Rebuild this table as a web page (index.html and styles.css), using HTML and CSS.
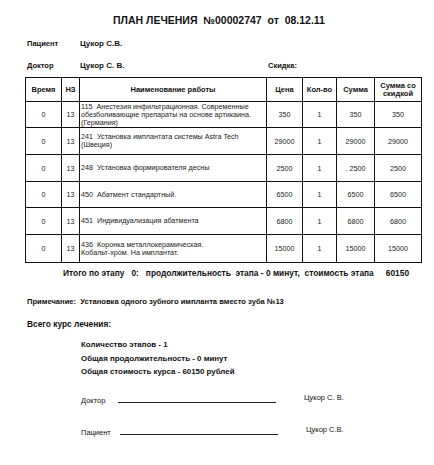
FILE: index.html
```html
<!DOCTYPE html>
<html lang="ru">
<head>
<meta charset="utf-8">
<link rel="stylesheet" href="styles.css">
</head>
<body>
<div class="page">
  <h1 class="title">ПЛАН ЛЕЧЕНИЯ&nbsp; №00002747&nbsp; от&nbsp; 08.12.11</h1>
  <div class="info">
    <span class="lbl">Пациент</span><span class="val">Цукор С.В.</span>
  </div>
  <div class="info">
    <span class="lbl">Доктор</span><span class="val">Цукор С. В.</span><span class="disc">Скидка:</span>
  </div>
  <table class="plan">
    <colgroup>
      <col class="c-time"><col class="c-nz"><col class="c-name"><col class="c-price"><col class="c-qty"><col class="c-sum"><col class="c-disc">
    </colgroup>
    <thead>
      <tr><th>Время</th><th>НЗ</th><th>Наименование работы</th><th>Цена</th><th>Кол-во</th><th>Сумма</th><th>Сумма со скидкой</th></tr>
    </thead>
    <tbody>
      <tr class="r1"><td>0</td><td>13</td><td class="name">115&nbsp; Анестезия инфильтрационная. Современные обезболивающие препараты на основе артикаина. (Германия)</td><td>350</td><td>1</td><td>350</td><td>350</td></tr>
      <tr class="r2"><td>0</td><td>13</td><td class="name">241&nbsp; Установка имплантата системы Astra Tech (Швеция)</td><td>29000</td><td>1</td><td>29000</td><td>29000</td></tr>
      <tr class="r3"><td>0</td><td>13</td><td class="name">248&nbsp; Установка формирователя десны</td><td>2500</td><td>1</td><td>.&nbsp;2500</td><td>2500</td></tr>
      <tr class="r4"><td>0</td><td>13</td><td class="name">450&nbsp; Абатмент стандартный.</td><td>6500</td><td>1</td><td>6500</td><td>6500</td></tr>
      <tr class="r5"><td>0</td><td>13</td><td class="name">451&nbsp; Индивидуализация абатмента</td><td>6800</td><td>1</td><td>6800</td><td>6800</td></tr>
      <tr class="r6"><td>0</td><td>13</td><td class="name">436&nbsp; Коронка металлокерамическая.<br>Кобальт-хром. На имплантат.</td><td>15000</td><td>1</td><td>15000</td><td>15000</td></tr>
    </tbody>
  </table>
  <div class="total">
    <span>Итого по этапу&nbsp;&nbsp; 0:&nbsp;&nbsp; продолжительность&nbsp; этапа - 0 минут,&nbsp; стоимость этапа</span>
    <span class="sum">60150</span>
  </div>
  <p class="note">Примечание:&nbsp; Установка одного зубного импланта вместо зуба №13</p>
  <h2 class="course">Всего курс лечения:</h2>
  <div class="summary">
    <div>Количество этапов - 1</div>
    <div>Общая продолжительность - 0 минут</div>
    <div>Общая стоимость курса - 60150 рублей</div>
  </div>
  <div class="sign">
    <span class="slbl">Доктор</span><span class="line"></span><span class="sname">Цукор С. В.</span>
  </div>
  <div class="sign">
    <span class="slbl">Пациент</span><span class="line"></span><span class="sname">Цукор С.В.</span>
  </div>
</div>
</body>
</html>
```
FILE: styles.css
```css
html, body {
  margin: 0;
  padding: 0;
  background: #fff;
}
.page {
  width: 434px;
  height: 465px;
  overflow: hidden;
  font-family: "Liberation Sans", Arial, sans-serif;
  color: #111;
  padding-top: 13px;
  box-sizing: border-box;
}
.title {
  margin: 0;
  font-size: 10.5px;
  line-height: 14px;
  font-weight: bold;
  text-align: center;
  padding-left: 4px;
}
.info {
  display: flex;
  align-items: center;
  height: 22px;
  padding-left: 27px;
  font-size: 7.5px;
  font-weight: bold;
}
.info:first-of-type { margin-top: 5px; }
.lbl { width: 53px; }
.val { width: 188px; font-size: 8px; }
.plan {
  margin: 1px 0 0 25px;
  border-collapse: collapse;
  table-layout: fixed;
  width: 396px;
  font-size: 7.2px;
  color: #222;
}
.c-time { width: 36px; }
.c-nz { width: 18px; }
.c-name { width: 187px; }
.c-price { width: 36px; }
.c-qty { width: 34px; }
.c-sum { width: 38px; }
.c-disc { width: 47px; }
.plan th, .plan td {
  border: 1px solid #111;
  padding: 0;
  text-align: center;
  vertical-align: middle;
}
.plan th {
  height: 23px;
  font-weight: bold;
  font-size: 7.5px;
  line-height: 8px;
  color: #111;
}
.plan td.name {
  text-align: left;
  padding-left: 1px;
  line-height: 8px;
}
.r1 td { height: 25px; }
.r2 td { height: 26px; }
.r3 td { height: 26px; }
.r4 td { height: 25px; }
.r5 td { height: 26px; }
.r6 td { height: 27px; }
.total {
  display: flex;
  margin-top: 5px;
  padding-left: 63px;
  font-size: 8.4px;
  font-weight: bold;
  line-height: 10px;
}
.total .sum { margin-left: 12px; }
.note {
  margin: 19px 0 0 27px;
  font-size: 7.6px;
  font-weight: bold;
  line-height: 9px;
}
.course {
  margin: 13px 0 0 27px;
  font-size: 8.4px;
  line-height: 11px;
  font-weight: bold;
}
.summary {
  margin: 8px 0 0 81px;
  font-size: 7.9px;
  font-weight: bold;
  line-height: 13.5px;
}
.sign {
  display: flex;
  align-items: flex-end;
  padding-left: 81px;
  font-size: 7.5px;
  height: 12px;
  margin-top: 14px;
}
.sign + .sign { margin-top: 20px; }
.slbl { width: 37px; }
.sign + .sign .slbl { width: 39px; }
.line {
  width: 158px;
  border-bottom: 1px solid #222;
  margin-bottom: 2px;
}
.sname { margin-left: 28px; margin-bottom: 3px; }
```
